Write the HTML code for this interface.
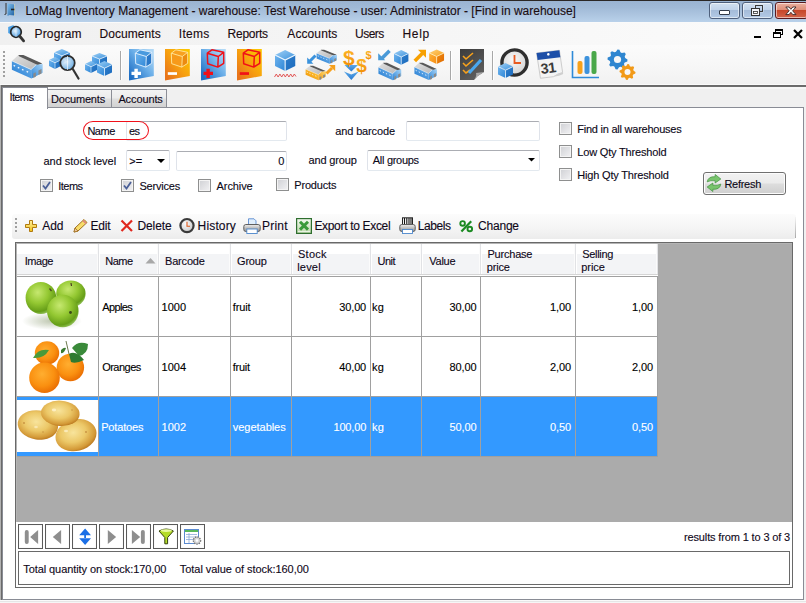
<!DOCTYPE html>
<html><head><meta charset="utf-8">
<style>
*{margin:0;padding:0;box-sizing:border-box}
html,body{width:806px;height:603px;overflow:hidden;background:#f0f0f0;font-family:"Liberation Sans",sans-serif;color:#000}
.a{position:absolute}
.t{position:absolute;white-space:pre;line-height:1;font-size:11px;color:#000;-webkit-text-stroke-width:0.12px}
svg{position:absolute;overflow:visible}
</style></head><body>
<div class="a" style="left:0px;top:0px;width:806px;height:1px;background:#2b2725"></div>
<div class="a" style="left:0px;top:1px;width:806px;height:21px;background:linear-gradient(#9ab3d1,#a0b9d6 30%,#b9d1ea)"></div>
<svg style="left:0px;top:0px" width="30" height="22" viewBox="0 0 30 22">
<defs><linearGradient id="dg" x1="0" y1="0" x2="1" y2="1"><stop offset="0" stop-color="#7fc0ee"/><stop offset="1" stop-color="#1f5fa0"/></linearGradient></defs>
<path d="M7.5 3.5 L14.5 4.5 L14.5 15.5 L9.5 15 L7.5 16 Z" fill="url(#dg)"/>
<path d="M6 3 L6 14 L4.5 14.5" stroke="#333" stroke-width="1" fill="none"/>
<path d="M11 9.5 L15 9.5" stroke="#222" stroke-width="1.6"/>
<path d="M14.5 4 L14.5 16" stroke="#e8e0b0" stroke-width="0.6"/>
</svg>
<div class="t" style="left:25.50px;top:5.00px;font-size:12px;letter-spacing:-0.005px;color:#1a0c10">LoMag Inventory Management - warehouse: Test Warehouse - user: Administrator - [Find in warehouse]</div>
<div class="a" style="left:709px;top:2px;width:31px;height:17px;border:1px solid #4f607c;border-radius:3px;background:linear-gradient(#d2e0f0,#c0d3ea 45%,#a5bcd9 50%,#b3cae6);box-shadow:inset 0 0 0 1px rgba(255,255,255,0.55)"></div>
<div class="a" style="left:742px;top:2px;width:31px;height:17px;border:1px solid #4f607c;border-radius:3px;background:linear-gradient(#d2e0f0,#c0d3ea 45%,#a5bcd9 50%,#b3cae6);box-shadow:inset 0 0 0 1px rgba(255,255,255,0.55)"></div>
<div class="a" style="left:775px;top:2px;width:33px;height:17px;border:1px solid #5a1a20;border-radius:3px;background:linear-gradient(#eab0a0,#de8e78 45%,#c7472a 50%,#d2644a);box-shadow:inset 0 0 0 1px rgba(255,255,255,0.55)"></div>
<div class="a" style="left:719px;top:10px;width:11px;height:5px;background:#fff;border:1px solid #333c4a;border-radius:1px"></div>
<svg style="left:742px;top:0px" width="31" height="22" viewBox="0 0 31 22"><rect x="13.5" y="5.5" width="7" height="6" fill="none" stroke="#333" stroke-width="1"/>
<rect x="12.8" y="4.8" width="8.4" height="7.4" fill="none" stroke="#fff" stroke-width="0.5" opacity="0.6"/>
<rect x="9.5" y="8.5" width="8" height="7" fill="#f4f6fa" stroke="#333" stroke-width="1"/>
<rect x="11.5" y="11.5" width="4" height="2" fill="#fff" stroke="#333" stroke-width="0.8"/></svg>
<svg style="left:775px;top:0px" width="31" height="22" viewBox="0 0 31 22"><path d="M10.8 7 L14 7 L15.9 9.3 L17.8 7 L21 7 L17.6 10.8 L21 14.6 L17.8 14.6 L15.9 12.3 L14 14.6 L10.8 14.6 L14.2 10.8 Z" fill="#fff" stroke="#3a2626" stroke-width="0.9" stroke-linejoin="round"/></svg>
<div class="a" style="left:0px;top:22px;width:806px;height:24px;background:linear-gradient(90deg,#f0f0f0,#f6f6f6 55%,#fbfbfb);border-top:1px solid #fafafa;border-bottom:1px solid #fbfbfb"></div>
<svg style="left:6px;top:24px" width="22" height="20" viewBox="0 0 22 20">
<defs><radialGradient id="mg" cx="0.4" cy="0.4" r="0.6"><stop offset="0" stop-color="#e4f2fc"/><stop offset="1" stop-color="#4a9ae0"/></radialGradient></defs>
<path d="M2.2 3 L7 1.2 L10 2.5 L10 8 L5 10.5 L2.2 9 Z" fill="#4aa0e6"/>
<circle cx="10" cy="8" r="5.3" fill="url(#mg)" stroke="#262626" stroke-width="1.7"/>
<path d="M10 3 L10 13" stroke="#f4faff" stroke-width="0.8" opacity="0.8"/>
<path d="M13.6 12 L17.6 16.8" stroke="#333" stroke-width="2.8" stroke-linecap="round"/>
</svg>
<div class="t" style="left:34.50px;top:28.00px;font-size:12px;letter-spacing:0.183px;color:#1a0a10">Program</div>
<div class="t" style="left:99.50px;top:28.00px;font-size:12px;letter-spacing:0.062px;color:#1a0a10">Documents</div>
<div class="t" style="left:178.80px;top:28.00px;font-size:12px;letter-spacing:0.300px;color:#1a0a10">Items</div>
<div class="t" style="left:227.60px;top:28.00px;font-size:12px;letter-spacing:-0.267px;color:#1a0a10">Reports</div>
<div class="t" style="left:287.30px;top:28.00px;font-size:12px;letter-spacing:0.100px;color:#1a0a10">Accounts</div>
<div class="t" style="left:355.00px;top:28.00px;font-size:12px;letter-spacing:-0.500px;color:#1a0a10">Users</div>
<div class="t" style="left:402.40px;top:28.00px;font-size:12px;letter-spacing:0.733px;color:#1a0a10">Help</div>
<div class="a" style="left:754px;top:35.5px;width:6.5px;height:2.5px;background:#000"></div>
<svg style="left:770px;top:26px" width="14" height="14" viewBox="0 0 14 14"><rect x="5.5" y="3.5" width="7" height="5" fill="none" stroke="#000" stroke-width="1"/><rect x="5" y="3" width="8" height="2" fill="#000"/>
<rect x="3.5" y="6.5" width="7" height="5" fill="#fff" stroke="#000" stroke-width="1"/><rect x="3" y="6" width="8" height="2" fill="#000"/></svg>
<svg style="left:792px;top:28px" width="12" height="12" viewBox="0 0 12 12"><path d="M2.8 2.8 L9.2 9.2 M9.2 2.8 L2.8 9.2" stroke="#000" stroke-width="2.2" stroke-linecap="square"/></svg>
<div class="a" style="left:0px;top:46px;width:806px;height:39px;background:linear-gradient(#fbfbfb,#f7f7f7 50%,#f1f1f1)"></div>
<div class="a" style="left:0px;top:84px;width:806px;height:1px;background:#fafafa"></div>
<div class="a" style="left:0px;top:85px;width:806px;height:1px;background:#6a6a6a"></div>
<div class="a" style="left:0px;top:86px;width:806px;height:1px;background:#6d6d6d"></div>
<div class="a" style="left:0px;top:87px;width:806px;height:2px;background:#f6f6f6"></div>
<div class="a" style="left:0px;top:85px;width:1px;height:516px;background:#b2b2b2"></div>
<div class="a" style="left:1px;top:85px;width:1px;height:516px;background:#6a6a6a"></div>
<div class="a" style="left:2px;top:107px;width:802px;height:493px;background:#fff;border:1px solid #898c95"></div>
<div class="a" style="left:2px;top:87px;width:46px;height:22px;background:#fff;border:1px solid #898c95;border-bottom:none"></div>
<div class="a" style="left:0px;top:600px;width:806px;height:1px;background:#fafafa"></div>
<div class="a" style="left:0px;top:601px;width:806px;height:1px;background:#e6e6e6"></div>
<div class="a" style="left:0px;top:602px;width:806px;height:1px;background:#f6f6f6"></div>
<div class="a" style="left:47px;top:89px;width:65px;height:19px;background:linear-gradient(#f3f3f3,#ececec 45%,#dedede 55%,#d2d2d2);border:1px solid #8c8e96"></div>
<div class="a" style="left:111px;top:89px;width:56px;height:19px;background:linear-gradient(#f3f3f3,#ececec 45%,#dedede 55%,#d2d2d2);border:1px solid #8c8e96"></div>
<div class="t" style="left:9.50px;top:92.00px;font-size:11px;letter-spacing:-0.625px;color:#10081a">Items</div>
<div class="t" style="left:51.00px;top:94.00px;font-size:11px;letter-spacing:-0.188px;color:#10081a">Documents</div>
<div class="t" style="left:118.40px;top:94.00px;font-size:11px;letter-spacing:-0.114px;color:#10081a">Accounts</div>
<svg width="0" height="0" style="position:absolute;left:0;top:0"><defs>
<linearGradient id="roof" x1="0.3" y1="1" x2="0.6" y2="0"><stop offset="0" stop-color="#f2f2f2"/><stop offset="0.6" stop-color="#cdcdcd"/><stop offset="0.85" stop-color="#a0a0a0"/><stop offset="1" stop-color="#5a5a5a"/></linearGradient>
<linearGradient id="bfront" x1="0" y1="0" x2="1" y2="0"><stop offset="0" stop-color="#4a9be0"/><stop offset="1" stop-color="#2e7fcf"/></linearGradient>
<linearGradient id="bend" x1="0" y1="0" x2="1" y2="1"><stop offset="0" stop-color="#8fc6f2"/><stop offset="1" stop-color="#3d8fd8"/></linearGradient>
<linearGradient id="ofront" x1="0" y1="0" x2="1" y2="0"><stop offset="0" stop-color="#ffc02a"/><stop offset="1" stop-color="#f39a12"/></linearGradient>
<linearGradient id="oend" x1="0" y1="0" x2="1" y2="1"><stop offset="0" stop-color="#ffd060"/><stop offset="1" stop-color="#f0a020"/></linearGradient>
<linearGradient id="ctop" x1="0" y1="0" x2="1" y2="1"><stop offset="0" stop-color="#9fd0f6"/><stop offset="1" stop-color="#3d92dc"/></linearGradient>
<linearGradient id="cleft" x1="0" y1="0" x2="1" y2="1"><stop offset="0" stop-color="#6fb4ee"/><stop offset="1" stop-color="#2e86d6"/></linearGradient>
<linearGradient id="cright" x1="0" y1="0" x2="1" y2="1"><stop offset="0" stop-color="#2f7fcc"/><stop offset="1" stop-color="#1c6bbd"/></linearGradient>
<linearGradient id="octop" x1="0" y1="0" x2="1" y2="1"><stop offset="0" stop-color="#ffd27a"/><stop offset="1" stop-color="#f8a11c"/></linearGradient>
<linearGradient id="ocleft" x1="0" y1="0" x2="1" y2="1"><stop offset="0" stop-color="#ffb43a"/><stop offset="1" stop-color="#f58a10"/></linearGradient>
<linearGradient id="ocright" x1="0" y1="0" x2="1" y2="1"><stop offset="0" stop-color="#f08a10"/><stop offset="1" stop-color="#e06a00"/></linearGradient>
<linearGradient id="docb" x1="0.9" y1="0.1" x2="0.1" y2="0.9"><stop offset="0" stop-color="#b0d8f6"/><stop offset="0.45" stop-color="#6aaee8"/><stop offset="1" stop-color="#1e6ec4"/></linearGradient>
<linearGradient id="doco" x1="0.9" y1="0.1" x2="0.1" y2="0.9"><stop offset="0" stop-color="#fcc400"/><stop offset="0.5" stop-color="#f7a010"/><stop offset="1" stop-color="#e8741a"/></linearGradient>
<linearGradient id="dark" x1="0" y1="0" x2="0.6" y2="1"><stop offset="0" stop-color="#3c3c3c"/><stop offset="1" stop-color="#5e5e5e"/></linearGradient>
<linearGradient id="roofl" x1="0" y1="0" x2="1" y2="1"><stop offset="0" stop-color="#e2e2e2"/><stop offset="1" stop-color="#b4b4b4"/></linearGradient>
<linearGradient id="wfb" x1="0" y1="1" x2="1" y2="0"><stop offset="0" stop-color="#1e78d0"/><stop offset="1" stop-color="#78b8ee"/></linearGradient>
<linearGradient id="wrb" x1="0" y1="1" x2="1" y2="0"><stop offset="0" stop-color="#2a84d8"/><stop offset="1" stop-color="#a8d4f6"/></linearGradient>
<linearGradient id="wfo" x1="0" y1="1" x2="1" y2="0"><stop offset="0" stop-color="#f09000"/><stop offset="1" stop-color="#ffcc40"/></linearGradient>
<linearGradient id="wro" x1="0" y1="1" x2="1" y2="0"><stop offset="0" stop-color="#f09a10"/><stop offset="1" stop-color="#ffd870"/></linearGradient>
<g id="wh">
 <path d="M0.9 6.9 L7.4 1.1 L31.2 9.5 L24.9 11 L20.1 15.5 Z" fill="url(#roofl)"/>
 <path d="M7.4 1.1 L12.4 1.1 L31.2 9.5 L26.8 11 L8.1 2.3 Z" fill="#585858"/>
 <path d="M0.9 6.9 L20.1 15.5 L20.4 24.4 L0.9 15.8 Z" fill="url(#wfb)"/>
 <path d="M20.1 15.5 L24.9 11 L31.7 10 L31.7 18.7 L20.4 24.4 Z" fill="url(#wrb)"/>
 <path d="M0.9 6.9 L20.1 15.5 L24.9 11" stroke="#f4f8fc" stroke-width="0.6" fill="none"/>
 <path d="M2.6 11.4 L4.1 12.1 M6.8 13.4 L8.3 14.1 M11 15.4 L12.5 16.1 M15.6 17.4 L17.1 18.1" stroke="#eef6ff" stroke-width="1.3"/>
 <path d="M22.3 19.5 L24.8 18.2 L24.8 22.8 L22.3 24 Z M27.4 16.5 L30.5 15 L30.5 19.5 L27.4 21 Z" fill="#8a8a8a"/>
</g>
<g id="who">
 <path d="M0.9 6.9 L7.4 1.1 L31.2 9.5 L24.9 11 L20.1 15.5 Z" fill="url(#roofl)"/>
 <path d="M7.4 1.1 L12.4 1.1 L31.2 9.5 L26.8 11 L8.1 2.3 Z" fill="#585858"/>
 <path d="M0.9 6.9 L20.1 15.5 L20.4 24.4 L0.9 15.8 Z" fill="url(#wfo)"/>
 <path d="M20.1 15.5 L24.9 11 L31.7 10 L31.7 18.7 L20.4 24.4 Z" fill="url(#wro)"/>
 <path d="M0.9 6.9 L20.1 15.5 L24.9 11" stroke="#fff8e8" stroke-width="0.6" fill="none"/>
 <path d="M2.6 11.4 L4.1 12.1 M6.8 13.4 L8.3 14.1 M11 15.4 L12.5 16.1 M15.6 17.4 L17.1 18.1" stroke="#fff" stroke-width="1.3"/>
 <path d="M22.3 19.5 L24.8 18.2 L24.8 22.8 L22.3 24 Z M27.4 16.5 L30.5 15 L30.5 19.5 L27.4 21 Z" fill="#8a8a8a"/>
</g>
<g id="cube">
 <path d="M0 3.6 L7.5 0 L15 3.6 L7.5 7.2 Z" fill="url(#ctop)"/>
 <path d="M0 3.6 L7.5 7.2 L7.5 15 L0 11.4 Z" fill="url(#cleft)"/>
 <path d="M7.5 7.2 L15 3.6 L15 11.4 L7.5 15 Z" fill="url(#cright)"/>
 <path d="M0 3.6 L7.5 7.2 L15 3.6 M7.5 7.2 L7.5 15" stroke="#eaf5ff" stroke-width="0.8" fill="none"/>
</g>
<g id="ocube">
 <path d="M0 3.6 L7.5 0 L15 3.6 L7.5 7.2 Z" fill="url(#octop)"/>
 <path d="M0 3.6 L7.5 7.2 L7.5 15 L0 11.4 Z" fill="url(#ocleft)"/>
 <path d="M7.5 7.2 L15 3.6 L15 11.4 L7.5 15 Z" fill="url(#ocright)"/>
 <path d="M0 3.6 L7.5 7.2 L15 3.6 M7.5 7.2 L7.5 15" stroke="#fff0c0" stroke-width="0.8" fill="none"/>
</g>
<g id="wcube">
 <path d="M0.5 4 L8 0.5 L16 4 L8 7.5 Z M0.5 4 L8 7.5 L8 16 L0.5 12.5 Z M8 7.5 L16 4 L16 12.5 L8 16 Z" fill="none" stroke-width="1.1" stroke-linejoin="round"/>
</g>
</defs></svg>
<div class="a" style="left:3px;top:51px;width:2px;height:2px;background:#a0a0a0"></div>
<div class="a" style="left:3px;top:55px;width:2px;height:2px;background:#a0a0a0"></div>
<div class="a" style="left:3px;top:59px;width:2px;height:2px;background:#a0a0a0"></div>
<div class="a" style="left:3px;top:63px;width:2px;height:2px;background:#a0a0a0"></div>
<div class="a" style="left:3px;top:67px;width:2px;height:2px;background:#a0a0a0"></div>
<div class="a" style="left:3px;top:71px;width:2px;height:2px;background:#a0a0a0"></div>
<div class="a" style="left:3px;top:75px;width:2px;height:2px;background:#a0a0a0"></div>
<svg style="left:11px;top:54px" width="33" height="26" viewBox="0 0 33 26"><use href="#wh"/></svg>
<svg style="left:48px;top:49px" width="32" height="32" viewBox="0 0 32 32">
<g transform="translate(6,0) scale(1.05,0.95)"><use href="#cube"/></g>
<g transform="translate(1,8) scale(0.8)"><use href="#cube"/></g>
<defs><radialGradient id="lens" cx="0.35" cy="0.35" r="0.7"><stop offset="0" stop-color="#e8f3fb"/><stop offset="1" stop-color="#5ea6e2"/></radialGradient></defs>
<circle cx="19.5" cy="14" r="7.2" fill="url(#lens)" fill-opacity="0.9" stroke="#2d2d2d" stroke-width="1.8"/>
<path d="M19.5 7 L19.5 21" stroke="#fff" stroke-width="0.8" opacity="0.8"/>
<path d="M24.5 19.5 L30.5 29.5" stroke="#333" stroke-width="2.2" stroke-linecap="round"/>
</svg>
<svg style="left:85px;top:53px" width="30" height="25" viewBox="0 0 30 25">
<g transform="translate(7,0) scale(1,0.85)"><use href="#cube"/></g>
<g transform="translate(0,8) scale(0.8)"><use href="#cube"/></g>
<g transform="translate(12,8) scale(1.0)"><use href="#cube"/></g>
</svg>
<div class="a" style="left:120px;top:51px;width:1px;height:29px;background:#a8a8a8"></div>
<div class="a" style="left:121px;top:51px;width:1px;height:29px;background:#ffffff"></div>
<div class="a" style="left:450px;top:51px;width:1px;height:29px;background:#a8a8a8"></div>
<div class="a" style="left:451px;top:51px;width:1px;height:29px;background:#ffffff"></div>
<div class="a" style="left:492px;top:51px;width:1px;height:29px;background:#a8a8a8"></div>
<div class="a" style="left:493px;top:51px;width:1px;height:29px;background:#ffffff"></div>
<svg style="left:129px;top:49px" width="25" height="32" viewBox="0 0 25 32"><path d="M0 0 L24.8 0 L24.8 27 L0 31.6 Z" fill="url(#docb)"/><path d="M6.3 4.2 L10.9 0.8 L22.7 3.3 L17.3 7.5 Z" fill="#4a9ade"/><path d="M6.3 4.2 L17.3 7.5 L16.8 18.1 L6.7 14.7 Z" fill="url(#cleft)"/><path d="M17.3 7.5 L22.7 3.3 L22.7 14.3 L16.8 18.1 Z" fill="#2a78c8"/><path d="M6.3 4.2 L10.9 0.8 L22.7 3.3 L17.3 7.5 Z M17.3 7.5 L16.8 18.1 M6.3 4.2 L6.7 14.7 L16.8 18.1 L22.7 14.3 L22.7 3.3" fill="none" stroke="#e8f4ff" stroke-width="0.9" stroke-linejoin="round"/><path d="M2.5 22.7 L12 22.7 L12 26.1 L2.5 26.1 Z M5.4 19.8 L8.8 19.8 L8.8 28.9 L5.4 28.9 Z" fill="#fff"/></svg>
<svg style="left:165px;top:49px" width="25" height="32" viewBox="0 0 25 32"><path d="M0 0 L24.8 0 L24.8 27 L0 31.6 Z" fill="url(#doco)"/><path d="M6.3 4.2 L10.9 0.8 L22.7 3.3 L17.3 7.5 Z" fill="#f8a020"/><path d="M6.3 4.2 L17.3 7.5 L16.8 18.1 L6.7 14.7 Z" fill="#f79a1a"/><path d="M17.3 7.5 L22.7 3.3 L22.7 14.3 L16.8 18.1 Z" fill="#ec8a10"/><path d="M6.3 4.2 L10.9 0.8 L22.7 3.3 L17.3 7.5 Z M17.3 7.5 L16.8 18.1 M6.3 4.2 L6.7 14.7 L16.8 18.1 L22.7 14.3 L22.7 3.3" fill="none" stroke="#ffe8a0" stroke-width="0.9" stroke-linejoin="round"/><path d="M2.8 23.2 L12 23.2 L12 25.9 L2.8 25.9 Z" fill="#fff"/></svg>
<svg style="left:201px;top:49px" width="25" height="32" viewBox="0 0 25 32"><path d="M0 0 L24.8 0 L24.8 27 L0 31.6 Z" fill="url(#docb)"/><path d="M6.3 4.2 L10.9 0.8 L22.7 3.3 L17.3 7.5 Z M17.3 7.5 L16.8 18.1 M6.3 4.2 L6.7 14.7 L16.8 18.1 L22.7 14.3 L22.7 3.3" fill="none" stroke="#f01018" stroke-width="1.5" stroke-linejoin="round"/><path d="M2.5 22.7 L12 22.7 L12 26.1 L2.5 26.1 Z M5.4 19.8 L8.8 19.8 L8.8 28.9 L5.4 28.9 Z" fill="#f01018"/></svg>
<svg style="left:237px;top:49px" width="25" height="32" viewBox="0 0 25 32"><path d="M0 0 L24.8 0 L24.8 27 L0 31.6 Z" fill="url(#doco)"/><path d="M6.3 4.2 L10.9 0.8 L22.7 3.3 L17.3 7.5 Z M17.3 7.5 L16.8 18.1 M6.3 4.2 L6.7 14.7 L16.8 18.1 L22.7 14.3 L22.7 3.3" fill="none" stroke="#f01018" stroke-width="1.5" stroke-linejoin="round"/><path d="M2.8 23.2 L12 23.2 L12 25.9 L2.8 25.9 Z" fill="#f01018"/></svg>
<svg style="left:274px;top:50px" width="23" height="29" viewBox="0 0 23 29"><g transform="translate(1,0) scale(1.35,1.4)"><use href="#cube"/></g>
<path d="M0.5 27 L2.3 24 L4.1 27 L5.9 24 L7.7 27 L9.5 24 L11.3 27 L13.1 24 L14.9 27 L16.7 24 L18.5 27 L20.3 24 L22 26.5" stroke="#e04848" stroke-width="0.9" fill="none"/></svg>
<svg style="left:305px;top:49px" width="33" height="32" viewBox="0 0 33 32">
<g transform="translate(11,0) scale(0.66,0.6)"><use href="#wh"/></g>
<g transform="translate(0,16) scale(0.66,0.62)"><use href="#who"/></g>
<path d="M10.5 6.5 L5 12" stroke="#3a92dc" stroke-width="3"/><path d="M2.2 14.8 L2.2 8.6 L8.4 14.8 Z" fill="#3a92dc"/>
<path d="M21.5 24.5 L27 19" stroke="#f7a01c" stroke-width="3"/><path d="M30.2 16 L24 16 L30.2 22.2 Z" fill="#f7a01c"/>
</svg>
<svg width="0" height="0" style="position:absolute"><defs><linearGradient id="dol" x1="0" y1="0" x2="0" y2="1"><stop offset="0" stop-color="#ffc030"/><stop offset="1" stop-color="#f08800"/></linearGradient>
<linearGradient id="chev" x1="0" y1="0" x2="0" y2="1"><stop offset="0" stop-color="#5aa8e8"/><stop offset="1" stop-color="#2a7ad0"/></linearGradient></defs></svg>
<svg style="left:343px;top:49px" width="30" height="32" viewBox="0 0 30 32">
<path d="M1.5 16 L15 16 L8.3 22.6 Z" fill="url(#chev)"/>
<path d="M0.9 22.6 L8.3 25.4 L15.7 22.6 L8.3 30.9 Z" fill="url(#chev)"/>
<text x="0" y="15.5" font-family="Liberation Sans" font-weight="bold" font-size="21" fill="url(#dol)">$</text>
<text x="13.2" y="22.5" font-family="Liberation Sans" font-weight="bold" font-size="19" fill="url(#dol)">$</text>
<text x="22.6" y="9.8" font-family="Liberation Sans" font-weight="bold" font-size="11" fill="url(#dol)">$</text>
</svg>
<svg style="left:377px;top:49px" width="32" height="32" viewBox="0 0 32 32">
<path d="M12.5 1.8 L4.5 9.8" stroke="#4a9ad8" stroke-width="3.6"/>
<path d="M1.2 11.3 L1.2 4.2 L8.3 11.3 Z" fill="#4a9ad8"/>
<g transform="translate(17,1) scale(0.96,0.98)"><use href="#cube"/></g>
<g transform="translate(0.8,13) scale(0.74,0.75)"><use href="#wh"/></g>
</svg>
<svg style="left:413px;top:49px" width="32" height="32" viewBox="0 0 32 32">
<path d="M1.8 12 L9.5 4.3" stroke="#f7a000" stroke-width="3.6"/>
<path d="M13 0.8 L5 0.8 L13 8.8 Z" fill="#f7a000"/>
<g transform="translate(16.2,0.5) scale(0.99,0.97)"><use href="#ocube"/></g>
<g transform="translate(0.8,12.8) scale(0.73,0.75)"><use href="#wh"/></g>
</svg>
<svg style="left:460px;top:49px" width="24" height="31" viewBox="0 0 24 31">
<path d="M0 0 L24 0 L24 23 Q18 26 14 31 L0 31 Z" fill="url(#dark)"/>
<path d="M24 23 Q18 26 14 31 Q17 27 16 24 Z" fill="#a8a8a8"/>
<path d="M3 7 L6 10 L13 4 M3 14 L6 17 L13 11 M3 21 L6 24 L10 21" stroke="#f8a21c" stroke-width="1.6" fill="none"/>
<path d="M9 24 L21 11" stroke="#4aa8f0" stroke-width="3.2"/>
</svg>
<svg style="left:498px;top:49px" width="31" height="30" viewBox="0 0 31 30">
<defs><radialGradient id="cface" cx="0.45" cy="0.4" r="0.6"><stop offset="0" stop-color="#f8f8f8"/><stop offset="1" stop-color="#d4d4d4"/></radialGradient></defs><circle cx="16.5" cy="13.5" r="12.6" fill="url(#cface)" stroke="#2e2e2e" stroke-width="3.4"/>
<path d="M16.5 6 L16.5 14 L23 14" stroke="#e85a20" stroke-width="1.8" fill="none"/>
<g transform="translate(0,14) scale(1,1)"><use href="#cube"/></g>
</svg>
<svg style="left:536px;top:49px" width="29" height="30" viewBox="0 0 29 30">
<g transform="rotate(-7 14 15)">
<path d="M2 2.5 L25 2.5 L25.5 25 Q20 25.5 16 28 L2.8 28 Z" fill="#f4f4f4" stroke="#bdbdbd" stroke-width="0.7"/>
<path d="M25.5 25 Q20 25.5 16 28 Q22 28 26 26.5 Z" fill="#cfcfcf"/>
<path d="M2 2.5 L25 2.5 L25.1 9.5 L2.2 9.5 Z" fill="#1d4fa8"/>
<circle cx="13.5" cy="5.2" r="1.3" fill="#fff"/>
<text x="4.2" y="23.8" font-family="Liberation Sans" font-weight="bold" font-size="14.5" fill="#3a3a3a" letter-spacing="-0.5">31</text>
</g></svg>
<svg style="left:571px;top:50px" width="30" height="29" viewBox="0 0 30 29">
<path d="M1.5 1 L1.5 27.5 L28 27.5" stroke="#2e8ad8" stroke-width="1.6" fill="none"/>
<rect x="6.5" y="11" width="5" height="13" rx="2" fill="#f7a21c"/>
<rect x="13.5" y="6" width="5" height="18" rx="2" fill="#3d92dc"/>
<rect x="20.5" y="1" width="5" height="23" rx="2" fill="#4aa84a"/>
</svg>
<svg style="left:607px;top:49px" width="30" height="32" viewBox="0 0 30 32"><polygon points="20.50,10.50 20.31,12.45 17.71,13.48 16.99,14.83 17.57,17.57 16.06,18.81 13.48,17.71 12.02,18.15 10.50,20.50 8.55,20.31 7.52,17.71 6.17,16.99 3.43,17.57 2.19,16.06 3.29,13.48 2.85,12.02 0.50,10.50 0.69,8.55 3.29,7.52 4.01,6.17 3.43,3.43 4.94,2.19 7.52,3.29 8.98,2.85 10.50,0.50 12.45,0.69 13.48,3.29 14.83,4.01 17.57,3.43 18.81,4.94 17.71,7.52 18.15,8.98" fill="#2f86d0"/><circle cx="10.5" cy="10.5" r="3.6" fill="#f7f7f7"/><polygon points="28.50,23.00 28.35,24.56 26.27,25.39 25.69,26.47 26.16,28.66 24.94,29.65 22.89,28.77 21.72,29.12 20.50,31.00 18.94,30.85 18.11,28.77 17.03,28.19 14.84,28.66 13.85,27.44 14.73,25.39 14.38,24.22 12.50,23.00 12.65,21.44 14.73,20.61 15.31,19.53 14.84,17.34 16.06,16.35 18.11,17.23 19.28,16.88 20.50,15.00 22.06,15.15 22.89,17.23 23.97,17.81 26.16,17.34 27.15,18.56 26.27,20.61 26.62,21.78" fill="#f29a18"/><circle cx="20.5" cy="23" r="3" fill="#f7f7f7"/></svg>
<div class="a" style="left:126px;top:121px;width:161px;height:20px;background:#fff;border:1px solid #dfe3ea;border-top-color:#abadb3;border-bottom-color:#e3e9ef;border-radius:2px"></div>
<div class="a" style="left:406px;top:121px;width:134px;height:20px;background:#fff;border:1px solid #dfe3ea;border-top-color:#abadb3;border-bottom-color:#e3e9ef;border-radius:2px"></div>
<div class="a" style="left:176px;top:151px;width:111px;height:20px;background:#fff;border:1px solid #dfe3ea;border-top-color:#abadb3;border-bottom-color:#e3e9ef;border-radius:2px"></div>
<div class="a" style="left:126px;top:150px;width:44px;height:21px;background:#fff;border:1px solid #dfe3ea;border-top-color:#abadb3;border-bottom-color:#e3e9ef;border-radius:2px"></div>
<div class="a" style="left:367px;top:150px;width:173px;height:21px;background:#fff;border:1px solid #dfe3ea;border-top-color:#abadb3;border-bottom-color:#e3e9ef;border-radius:2px"></div>
<svg style="left:157px;top:159px" width="9" height="5" viewBox="0 0 9 5"><path d="M0 0 L8 0 L4 4 Z" fill="#000"/></svg>
<svg style="left:528px;top:158px" width="8" height="5" viewBox="0 0 8 5"><path d="M0 0 L7 0 L3.5 3.5 Z" fill="#000"/></svg>
<div class="a" style="left:83px;top:121px;width:66px;height:19px;border:1.2px solid #f0101a;border-radius:10px/9.5px"></div>
<div class="t" style="left:87.40px;top:126.00px;font-size:11px;letter-spacing:-0.467px;color:#0c0818">Name</div>
<div class="t" style="left:129.00px;top:126.00px;font-size:11px;letter-spacing:-0.500px;color:#0c0818">es</div>
<div class="t" style="left:43.40px;top:156.00px;font-size:11px;letter-spacing:0.000px;color:#0c0818">and stock level</div>
<div class="t" style="left:129.30px;top:156.00px;font-size:11px;letter-spacing:0.000px;color:#0c0818">&gt;=</div>
<div class="t" style="left:278.20px;top:156.00px;font-size:11px;letter-spacing:0.000px;color:#0c0818">0</div>
<div class="t" style="left:335.30px;top:126.00px;font-size:11px;letter-spacing:-0.140px;color:#0c0818">and barcode</div>
<div class="t" style="left:308.50px;top:155.00px;font-size:11px;letter-spacing:-0.138px;color:#0c0818">and group</div>
<div class="t" style="left:372.80px;top:155.00px;font-size:11px;letter-spacing:-0.300px;color:#0c0818">All groups</div>
<div class="a" style="left:40px;top:179px;width:13px;height:13px;border:1px solid #8e8f8f;background:linear-gradient(135deg,#cfd0d4,#f2f2f4);box-shadow:inset 0 0 0 1px #f4f4f4"></div>
<svg style="left:40px;top:179px" width="13" height="13" viewBox="0 0 13 13"><path d="M3 6.5 L5.5 9.5 L10 3" stroke="#4a5f97" stroke-width="1.8" fill="none"/></svg>
<div class="t" style="left:58.30px;top:181.00px;font-size:11px;letter-spacing:-0.525px;color:#0c0818">Items</div>
<div class="a" style="left:121px;top:179px;width:13px;height:13px;border:1px solid #8e8f8f;background:linear-gradient(135deg,#cfd0d4,#f2f2f4);box-shadow:inset 0 0 0 1px #f4f4f4"></div>
<svg style="left:121px;top:179px" width="13" height="13" viewBox="0 0 13 13"><path d="M3 6.5 L5.5 9.5 L10 3" stroke="#4a5f97" stroke-width="1.8" fill="none"/></svg>
<div class="t" style="left:139.50px;top:181.00px;font-size:11px;letter-spacing:-0.214px;color:#0c0818">Services</div>
<div class="a" style="left:198px;top:179px;width:13px;height:13px;border:1px solid #8e8f8f;background:linear-gradient(135deg,#cfd0d4,#f2f2f4);box-shadow:inset 0 0 0 1px #f4f4f4"></div>
<div class="t" style="left:216.60px;top:181.00px;font-size:11px;letter-spacing:-0.100px;color:#0c0818">Archive</div>
<div class="a" style="left:276px;top:178px;width:13px;height:13px;border:1px solid #8e8f8f;background:linear-gradient(135deg,#cfd0d4,#f2f2f4);box-shadow:inset 0 0 0 1px #f4f4f4"></div>
<div class="t" style="left:294.30px;top:180.00px;font-size:11px;letter-spacing:-0.186px;color:#0c0818">Products</div>
<div class="a" style="left:559px;top:122px;width:13px;height:13px;border:1px solid #8e8f8f;background:linear-gradient(135deg,#cfd0d4,#f2f2f4);box-shadow:inset 0 0 0 1px #f4f4f4"></div>
<div class="t" style="left:577.30px;top:124.00px;font-size:11px;letter-spacing:-0.238px;color:#0c0818">Find in all warehouses</div>
<div class="a" style="left:559px;top:145px;width:13px;height:13px;border:1px solid #8e8f8f;background:linear-gradient(135deg,#cfd0d4,#f2f2f4);box-shadow:inset 0 0 0 1px #f4f4f4"></div>
<div class="t" style="left:577.30px;top:147.00px;font-size:11px;letter-spacing:-0.181px;color:#0c0818">Low Qty Threshold</div>
<div class="a" style="left:559px;top:168px;width:13px;height:13px;border:1px solid #8e8f8f;background:linear-gradient(135deg,#cfd0d4,#f2f2f4);box-shadow:inset 0 0 0 1px #f4f4f4"></div>
<div class="t" style="left:577.30px;top:170.00px;font-size:11px;letter-spacing:-0.182px;color:#0c0818">High Qty Threshold</div>
<div class="a" style="left:703px;top:172px;width:83px;height:23px;border:1px solid #707070;border-radius:3px;background:linear-gradient(#f2f2f2,#ebebeb 48%,#dddddd 52%,#cfcfcf);box-shadow:inset 0 0 0 1px #fcfcfc"></div>
<svg style="left:705px;top:175px" width="18" height="16" viewBox="0 0 18 16"><g transform="translate(9 8) scale(1.14) translate(-9 -8)">
<path d="M3 7 Q4 2 10 2.5 L10 0.5 L15 4.5 L10 8 L10 6 Q6 5.5 3 7 Z" fill="#78c46c" stroke="#3e8e3a" stroke-width="0.6"/>
<path d="M15 9 Q14 14 8 13.5 L8 15.5 L3 11.5 L8 8 L8 10 Q12 10.5 15 9 Z" fill="#78c46c" stroke="#3e8e3a" stroke-width="0.6"/>
</g></svg>
<div class="t" style="left:724.40px;top:179.00px;font-size:11px;letter-spacing:-0.267px;color:#0c0818">Refresh</div>
<div class="a" style="left:12px;top:214px;width:784px;height:25px;border-radius:3px;background:linear-gradient(#fcfcfc,#f5f5f5 55%,#ececec)"></div>
<div class="a" style="left:15px;top:218px;width:2px;height:2px;background:#a0a0a0"></div>
<div class="a" style="left:15px;top:222px;width:2px;height:2px;background:#a0a0a0"></div>
<div class="a" style="left:15px;top:226px;width:2px;height:2px;background:#a0a0a0"></div>
<div class="a" style="left:15px;top:230px;width:2px;height:2px;background:#a0a0a0"></div>
<div class="a" style="left:795px;top:217px;width:1px;height:21px;background:linear-gradient(#f4f4f4,#a8a8a8)"></div>
<svg style="left:24px;top:219px" width="14" height="14" viewBox="0 0 14 14"><defs><linearGradient id="plg" x1="0" y1="0" x2="0" y2="1"><stop offset="0" stop-color="#fff0a0"/><stop offset="1" stop-color="#f2c21a"/></linearGradient></defs><path d="M5.5 1.5 L8.5 1.5 L8.5 5.5 L12.5 5.5 L12.5 8.5 L8.5 8.5 L8.5 12.5 L5.5 12.5 L5.5 8.5 L1.5 8.5 L1.5 5.5 L5.5 5.5 Z" fill="url(#plg)" stroke="#b07a10" stroke-width="1"/></svg>
<div class="t" style="left:42.30px;top:220.00px;font-size:12px;letter-spacing:-0.050px;color:#10081a">Add</div>
<svg style="left:72px;top:218px" width="17" height="16" viewBox="0 0 17 16"><path d="M2 14 L3 10 L12 1.5 L15 4.5 L6 13 Z" fill="#f7dc6a" stroke="#a07020" stroke-width="1"/>
<path d="M2 14 L3 10 L6 13 Z" fill="#f0c8a0" stroke="#a07020" stroke-width="0.8"/><path d="M11 2.5 L14 5.5" stroke="#e08080" stroke-width="1.5"/></svg>
<div class="t" style="left:90.50px;top:220.00px;font-size:12px;letter-spacing:-0.233px;color:#10081a">Edit</div>
<svg style="left:120px;top:219px" width="14" height="14" viewBox="0 0 14 14"><path d="M1.5 1.5 L12 12 M12 1.5 L1.5 12" stroke="#e0281e" stroke-width="2.2"/></svg>
<div class="t" style="left:137.40px;top:220.00px;font-size:12px;letter-spacing:-0.080px;color:#10081a">Delete</div>
<svg style="left:179px;top:218px" width="17" height="17" viewBox="0 0 17 17"><defs><radialGradient id="clk" cx="0.4" cy="0.35" r="0.7"><stop offset="0" stop-color="#fafafa"/><stop offset="1" stop-color="#c8c8c8"/></radialGradient></defs><circle cx="8" cy="7.6" r="6.6" fill="url(#clk)" stroke="#3a3a3a" stroke-width="2.2"/><path d="M8 3.8 L8 8.2 L11 8.2" stroke="#e05818" stroke-width="1.1" fill="none"/></svg>
<div class="t" style="left:197.60px;top:220.00px;font-size:12px;letter-spacing:0.150px;color:#10081a">History</div>
<svg style="left:243px;top:218px" width="18" height="16" viewBox="0 0 18 16"><defs><linearGradient id="prb" x1="0" y1="0" x2="0" y2="1"><stop offset="0" stop-color="#eeeeee"/><stop offset="1" stop-color="#8e8e8e"/></linearGradient></defs>
<path d="M5.5 0.8 L11 0.8 L13 2.8 L13 8 L5.5 8 Z" fill="#dfeefc" stroke="#5a8ad0" stroke-width="0.9"/>
<rect x="0.8" y="6.5" width="16.4" height="7" rx="2" fill="url(#prb)" stroke="#5e5e5e" stroke-width="1"/>
<rect x="3.8" y="11" width="10.4" height="4.5" fill="#fff" stroke="#4a86cc" stroke-width="0.9"/></svg>
<div class="t" style="left:262.00px;top:220.00px;font-size:12px;letter-spacing:0.200px;color:#10081a">Print</div>
<svg style="left:296px;top:218px" width="16" height="16" viewBox="0 0 16 16"><defs><linearGradient id="xlg" x1="0" y1="0" x2="0" y2="1"><stop offset="0" stop-color="#f4faf0"/><stop offset="1" stop-color="#bcd8aa"/></linearGradient></defs>
<rect x="0.6" y="0.6" width="14.8" height="14.8" fill="url(#xlg)" stroke="#2e6e2e" stroke-width="1.2"/>
<path d="M4 3.8 L12 11.6 M12 3.8 L4 11.6" stroke="#3a9a3a" stroke-width="3"/>
<path d="M2 13.5 L14 13.5" stroke="#fff" stroke-width="0.8" opacity="0.8"/></svg>
<div class="t" style="left:314.40px;top:220.00px;font-size:12px;letter-spacing:-0.321px;color:#10081a">Export to Excel</div>
<svg style="left:399px;top:217px" width="17" height="18" viewBox="0 0 17 18">
<rect x="3.5" y="0.8" width="10" height="8" fill="#fff" stroke="#222" stroke-width="1"/>
<path d="M5.5 1 L5.5 8.5 M7.8 1 L7.8 8.5 M10 1 L10 8.5 M12 1 L12 8.5" stroke="#111" stroke-width="1.1"/>
<rect x="0.8" y="7.5" width="15.4" height="7" rx="2" fill="url(#prb)" stroke="#5e5e5e" stroke-width="1"/>
<rect x="3.5" y="12.5" width="10" height="4" fill="#fff" stroke="#4a86cc" stroke-width="0.9"/></svg>
<div class="t" style="left:417.70px;top:220.00px;font-size:12px;letter-spacing:-0.420px;color:#10081a">Labels</div>
<svg style="left:459px;top:220px" width="15" height="13" viewBox="0 0 15 13">
<circle cx="3.6" cy="3.4" r="2.3" fill="none" stroke="#1b8a22" stroke-width="1.9"/>
<circle cx="10.8" cy="9" r="2.3" fill="none" stroke="#1b8a22" stroke-width="1.9"/>
<path d="M12.2 1.2 L2.4 11.4" stroke="#1b8a22" stroke-width="2.2"/></svg>
<div class="t" style="left:478.00px;top:220.00px;font-size:12px;letter-spacing:-0.200px;color:#10081a">Change</div>
<div class="a" style="left:15px;top:242px;width:778px;height:346px;border:1px solid #696969;background:#fff"></div>
<div class="a" style="left:16px;top:243px;width:776px;height:279px;background:#ababab"></div>
<div class="a" style="left:16px;top:243px;width:642px;height:31px;background:linear-gradient(#fff 0,#fff 11px,#f3f4f6 11px,#f3f4f6 100%)"></div>
<div class="a" style="left:16px;top:274px;width:642px;height:1px;background:#d5d5d5"></div>
<div class="a" style="left:16px;top:275px;width:642px;height:1px;background:#fff"></div>
<div class="a" style="left:97px;top:243px;width:1px;height:31px;background:#fbfbfb"></div>
<div class="a" style="left:98px;top:243px;width:1px;height:31px;background:#e1e2e5"></div>
<div class="a" style="left:99px;top:243px;width:1px;height:31px;background:#ffffff"></div>
<div class="a" style="left:157px;top:243px;width:1px;height:31px;background:#fbfbfb"></div>
<div class="a" style="left:158px;top:243px;width:1px;height:31px;background:#e1e2e5"></div>
<div class="a" style="left:159px;top:243px;width:1px;height:31px;background:#ffffff"></div>
<div class="a" style="left:229px;top:243px;width:1px;height:31px;background:#fbfbfb"></div>
<div class="a" style="left:230px;top:243px;width:1px;height:31px;background:#e1e2e5"></div>
<div class="a" style="left:231px;top:243px;width:1px;height:31px;background:#ffffff"></div>
<div class="a" style="left:290px;top:243px;width:1px;height:31px;background:#fbfbfb"></div>
<div class="a" style="left:291px;top:243px;width:1px;height:31px;background:#e1e2e5"></div>
<div class="a" style="left:292px;top:243px;width:1px;height:31px;background:#ffffff"></div>
<div class="a" style="left:369px;top:243px;width:1px;height:31px;background:#fbfbfb"></div>
<div class="a" style="left:370px;top:243px;width:1px;height:31px;background:#e1e2e5"></div>
<div class="a" style="left:371px;top:243px;width:1px;height:31px;background:#ffffff"></div>
<div class="a" style="left:420px;top:243px;width:1px;height:31px;background:#fbfbfb"></div>
<div class="a" style="left:421px;top:243px;width:1px;height:31px;background:#e1e2e5"></div>
<div class="a" style="left:422px;top:243px;width:1px;height:31px;background:#ffffff"></div>
<div class="a" style="left:479px;top:243px;width:1px;height:31px;background:#fbfbfb"></div>
<div class="a" style="left:480px;top:243px;width:1px;height:31px;background:#e1e2e5"></div>
<div class="a" style="left:481px;top:243px;width:1px;height:31px;background:#ffffff"></div>
<div class="a" style="left:574px;top:243px;width:1px;height:31px;background:#fbfbfb"></div>
<div class="a" style="left:575px;top:243px;width:1px;height:31px;background:#e1e2e5"></div>
<div class="a" style="left:576px;top:243px;width:1px;height:31px;background:#ffffff"></div>
<div class="a" style="left:656px;top:243px;width:1px;height:31px;background:#fbfbfb"></div>
<div class="a" style="left:657px;top:243px;width:1px;height:31px;background:#e1e2e5"></div>
<div class="t" style="left:24.70px;top:256.00px;font-size:11px;letter-spacing:-0.450px;color:#10081a">Image</div>
<div class="t" style="left:105.30px;top:256.00px;font-size:11px;letter-spacing:-0.533px;color:#10081a">Name</div>
<svg style="left:145px;top:257px" width="11" height="7" viewBox="0 0 11 7"><path d="M0.5 6.5 L5.5 1 L10.5 6.5 Z" fill="#a8a8a8"/></svg>
<div class="t" style="left:165.00px;top:256.00px;font-size:11px;letter-spacing:-0.183px;color:#10081a">Barcode</div>
<div class="t" style="left:237.10px;top:256.00px;font-size:11px;letter-spacing:-0.225px;color:#10081a">Group</div>
<div class="t" style="left:297.90px;top:249.00px;font-size:11px;letter-spacing:0.300px;color:#10081a">Stock</div>
<div class="t" style="left:297.20px;top:262.00px;font-size:11px;letter-spacing:0.200px;color:#10081a">level</div>
<div class="t" style="left:377.60px;top:256.00px;font-size:11px;letter-spacing:-0.533px;color:#10081a">Unit</div>
<div class="t" style="left:429.30px;top:256.00px;font-size:11px;letter-spacing:-0.275px;color:#10081a">Value</div>
<div class="t" style="left:487.50px;top:249.00px;font-size:11px;letter-spacing:-0.214px;color:#10081a">Purchase</div>
<div class="t" style="left:486.80px;top:262.00px;font-size:11px;letter-spacing:-0.175px;color:#10081a">price</div>
<div class="t" style="left:582.20px;top:249.00px;font-size:11px;letter-spacing:-0.317px;color:#10081a">Selling</div>
<div class="t" style="left:581.30px;top:262.00px;font-size:11px;letter-spacing:-0.075px;color:#10081a">price</div>
<div class="a" style="left:16px;top:276px;width:642px;height:1px;background:#a0a0a0"></div>
<div class="a" style="left:16px;top:277px;width:642px;height:59px;background:#ffffff"></div>
<div class="a" style="left:16px;top:336px;width:642px;height:1px;background:#a0a0a0"></div>
<div class="a" style="left:98px;top:277px;width:1px;height:59px;background:#a0a0a0"></div>
<div class="a" style="left:158px;top:277px;width:1px;height:59px;background:#a0a0a0"></div>
<div class="a" style="left:230px;top:277px;width:1px;height:59px;background:#a0a0a0"></div>
<div class="a" style="left:291px;top:277px;width:1px;height:59px;background:#a0a0a0"></div>
<div class="a" style="left:370px;top:277px;width:1px;height:59px;background:#a0a0a0"></div>
<div class="a" style="left:421px;top:277px;width:1px;height:59px;background:#a0a0a0"></div>
<div class="a" style="left:480px;top:277px;width:1px;height:59px;background:#a0a0a0"></div>
<div class="a" style="left:575px;top:277px;width:1px;height:59px;background:#a0a0a0"></div>
<div class="a" style="left:657px;top:277px;width:1px;height:59px;background:#a0a0a0"></div>
<div class="t" style="left:102.20px;top:302.00px;font-size:11px;letter-spacing:-0.600px;color:#000000">Apples</div>
<div class="t" style="left:161.60px;top:302.00px;font-size:11px;letter-spacing:0.000px;color:#000000">1000</div>
<div class="t" style="left:232.80px;top:302.00px;font-size:11px;letter-spacing:-0.150px;color:#000000">fruit</div>
<div class="t" style="left:339.30px;top:302.00px;font-size:11px;letter-spacing:-0.150px;color:#000000">30,00</div>
<div class="t" style="left:372.10px;top:302.00px;font-size:11px;letter-spacing:0.200px;color:#000000">kg</div>
<div class="t" style="left:449.50px;top:302.00px;font-size:11px;letter-spacing:-0.100px;color:#000000">30,00</div>
<div class="t" style="left:550.00px;top:302.00px;font-size:11px;letter-spacing:-0.100px;color:#000000">1,00</div>
<div class="t" style="left:632.00px;top:302.00px;font-size:11px;letter-spacing:-0.100px;color:#000000">1,00</div>
<div class="a" style="left:16px;top:280px;width:82px;height:52px;background:#fff"></div>
<div class="a" style="left:16px;top:337px;width:642px;height:59px;background:#ffffff"></div>
<div class="a" style="left:16px;top:396px;width:642px;height:1px;background:#a0a0a0"></div>
<div class="a" style="left:98px;top:337px;width:1px;height:59px;background:#a0a0a0"></div>
<div class="a" style="left:158px;top:337px;width:1px;height:59px;background:#a0a0a0"></div>
<div class="a" style="left:230px;top:337px;width:1px;height:59px;background:#a0a0a0"></div>
<div class="a" style="left:291px;top:337px;width:1px;height:59px;background:#a0a0a0"></div>
<div class="a" style="left:370px;top:337px;width:1px;height:59px;background:#a0a0a0"></div>
<div class="a" style="left:421px;top:337px;width:1px;height:59px;background:#a0a0a0"></div>
<div class="a" style="left:480px;top:337px;width:1px;height:59px;background:#a0a0a0"></div>
<div class="a" style="left:575px;top:337px;width:1px;height:59px;background:#a0a0a0"></div>
<div class="a" style="left:657px;top:337px;width:1px;height:59px;background:#a0a0a0"></div>
<div class="t" style="left:102.20px;top:362.00px;font-size:11px;letter-spacing:-0.517px;color:#000000">Oranges</div>
<div class="t" style="left:161.60px;top:362.00px;font-size:11px;letter-spacing:0.000px;color:#000000">1004</div>
<div class="t" style="left:232.80px;top:362.00px;font-size:11px;letter-spacing:-0.300px;color:#000000">fruit</div>
<div class="t" style="left:339.30px;top:362.00px;font-size:11px;letter-spacing:-0.150px;color:#000000">40,00</div>
<div class="t" style="left:372.10px;top:362.00px;font-size:11px;letter-spacing:0.200px;color:#000000">kg</div>
<div class="t" style="left:449.50px;top:362.00px;font-size:11px;letter-spacing:-0.100px;color:#000000">80,00</div>
<div class="t" style="left:550.00px;top:362.00px;font-size:11px;letter-spacing:-0.100px;color:#000000">2,00</div>
<div class="t" style="left:632.00px;top:362.00px;font-size:11px;letter-spacing:-0.100px;color:#000000">2,00</div>
<div class="a" style="left:16px;top:340px;width:82px;height:52px;background:#fff"></div>
<div class="a" style="left:16px;top:397px;width:642px;height:59px;background:#3399ff"></div>
<div class="a" style="left:16px;top:456px;width:642px;height:1px;background:#a0a0a0"></div>
<div class="a" style="left:98px;top:397px;width:1px;height:59px;background:#a0a0a0"></div>
<div class="a" style="left:158px;top:397px;width:1px;height:59px;background:#a0a0a0"></div>
<div class="a" style="left:230px;top:397px;width:1px;height:59px;background:#a0a0a0"></div>
<div class="a" style="left:291px;top:397px;width:1px;height:59px;background:#a0a0a0"></div>
<div class="a" style="left:370px;top:397px;width:1px;height:59px;background:#a0a0a0"></div>
<div class="a" style="left:421px;top:397px;width:1px;height:59px;background:#a0a0a0"></div>
<div class="a" style="left:480px;top:397px;width:1px;height:59px;background:#a0a0a0"></div>
<div class="a" style="left:575px;top:397px;width:1px;height:59px;background:#a0a0a0"></div>
<div class="a" style="left:657px;top:397px;width:1px;height:59px;background:#a0a0a0"></div>
<div class="t" style="left:101.20px;top:422.00px;font-size:11px;letter-spacing:-0.157px;color:#ffffff">Potatoes</div>
<div class="t" style="left:161.60px;top:422.00px;font-size:11px;letter-spacing:0.000px;color:#ffffff">1002</div>
<div class="t" style="left:232.80px;top:422.00px;font-size:11px;letter-spacing:-0.033px;color:#ffffff">vegetables</div>
<div class="t" style="left:333.45px;top:422.00px;font-size:11px;letter-spacing:-0.150px;color:#ffffff">100,00</div>
<div class="t" style="left:372.10px;top:422.00px;font-size:11px;letter-spacing:0.200px;color:#ffffff">kg</div>
<div class="t" style="left:449.50px;top:422.00px;font-size:11px;letter-spacing:-0.100px;color:#ffffff">50,00</div>
<div class="t" style="left:550.00px;top:422.00px;font-size:11px;letter-spacing:-0.100px;color:#ffffff">0,50</div>
<div class="t" style="left:632.00px;top:422.00px;font-size:11px;letter-spacing:-0.100px;color:#ffffff">0,50</div>
<div class="a" style="left:16px;top:400px;width:82px;height:52px;background:#fff"></div>
<svg width="0" height="0" style="position:absolute;left:0;top:0"><defs>
<radialGradient id="apple" cx="0.4" cy="0.33" r="0.68"><stop offset="0" stop-color="#c6e870"/><stop offset="0.5" stop-color="#94c832"/><stop offset="0.88" stop-color="#669e18"/><stop offset="1" stop-color="#8cbc50"/></radialGradient>
<radialGradient id="orange" cx="0.42" cy="0.38" r="0.66"><stop offset="0" stop-color="#ffae30"/><stop offset="0.6" stop-color="#fa9010"/><stop offset="1" stop-color="#e86a00"/></radialGradient>
<radialGradient id="potato" cx="0.45" cy="0.4" r="0.62"><stop offset="0" stop-color="#f8e49c"/><stop offset="0.5" stop-color="#ecc868"/><stop offset="0.85" stop-color="#d49a38"/><stop offset="1" stop-color="#b8761e"/></radialGradient>
<radialGradient id="shadow" cx="0.5" cy="0.5" r="0.5"><stop offset="0" stop-color="#8a9a70" stop-opacity="0.55"/><stop offset="1" stop-color="#8a9a70" stop-opacity="0"/></radialGradient>
</defs></svg>
<svg style="left:16px;top:276px" width="82" height="60" viewBox="0 0 82 60">
<ellipse cx="36" cy="45" rx="30" ry="9" fill="url(#shadow)"/>
<ellipse cx="54.9" cy="17.8" rx="14.7" ry="13.4" fill="url(#apple)"/>
<ellipse cx="24.9" cy="21.9" rx="15.3" ry="16" fill="url(#apple)"/>
<ellipse cx="46.8" cy="35" rx="15.8" ry="16.3" fill="url(#apple)"/>
<path d="M55 7 L55.5 10" stroke="#4a3a20" stroke-width="1.2"/>
<circle cx="54.5" cy="36.5" r="1.4" fill="#3a4a18"/><path d="M33.5 12.5 L35.5 15" stroke="#4a4a20" stroke-width="1.3"/>
</svg>
<svg style="left:16px;top:336px" width="82" height="60" viewBox="0 0 82 60">
<ellipse cx="31" cy="17" rx="12.2" ry="11.7" fill="url(#orange)"/>
<ellipse cx="54.4" cy="31.5" rx="13.7" ry="13.7" fill="url(#orange)"/>
<ellipse cx="28.5" cy="41.7" rx="15.3" ry="15.3" fill="url(#orange)"/>
<path d="M17 22 Q22 12 33 14 Q28 23 17 22 Z" fill="#4a9a3a"/>
<path d="M56 12 Q62 4 72 8 Q72 18 63 20 Z" fill="#3a8a3a"/>
<path d="M53 18 Q60 14 68 24 Q60 28 55 26 Z" fill="#2f7a30"/>
<path d="M45 14 Q48 11 50 12 Q48 18 45 17 Z" fill="#3a7a30"/>
<path d="M50 5 L53 18" stroke="#5a6a3a" stroke-width="0.9"/>
</svg>
<svg style="left:16px;top:396px" width="82" height="60" viewBox="0 0 82 60">
<ellipse cx="21.9" cy="29" rx="20.3" ry="14.7" transform="rotate(8 21.9 29)" fill="url(#potato)"/>
<ellipse cx="60" cy="39.2" rx="20.8" ry="15.8" transform="rotate(-14 60 39.2)" fill="url(#potato)"/>
<ellipse cx="44.3" cy="17.3" rx="19.3" ry="12.7" transform="rotate(4 44.3 17.3)" fill="url(#potato)"/>
<ellipse cx="38" cy="14" rx="2.2" ry="1.4" fill="#fff4d0" opacity="0.8"/>
<ellipse cx="50" cy="35" rx="2" ry="1.3" fill="#fff4d0" opacity="0.7"/>
<ellipse cx="20" cy="31" rx="1.8" ry="1.2" fill="#fff4d0" opacity="0.6"/>
<circle cx="8" cy="27" r="0.9" fill="#b87a30" opacity="0.7"/><circle cx="70" cy="36" r="0.9" fill="#b87a30" opacity="0.7"/>
<circle cx="27" cy="36" r="0.8" fill="#b87a30" opacity="0.6"/><circle cx="56" cy="14" r="0.8" fill="#b87a30" opacity="0.6"/>
</svg>
<div class="a" style="left:16px;top:243px;width:1px;height:279px;background:#b4b4b4"></div>
<div class="a" style="left:16px;top:243px;width:776px;height:1px;background:#b4b4b4"></div>
<div class="a" style="left:18px;top:524px;width:25px;height:25px;border:1px solid #5a5a5a;background:#fff;box-shadow:inset 0 0 0 1px #fafafa"></div>
<div class="a" style="left:45px;top:524px;width:25px;height:25px;border:1px solid #5a5a5a;background:#fff;box-shadow:inset 0 0 0 1px #fafafa"></div>
<div class="a" style="left:72px;top:524px;width:25px;height:25px;border:1px solid #5a5a5a;background:#fff;box-shadow:inset 0 0 0 1px #fafafa"></div>
<div class="a" style="left:99px;top:524px;width:25px;height:25px;border:1px solid #5a5a5a;background:#fff;box-shadow:inset 0 0 0 1px #fafafa"></div>
<div class="a" style="left:126px;top:524px;width:25px;height:25px;border:1px solid #5a5a5a;background:#fff;box-shadow:inset 0 0 0 1px #fafafa"></div>
<div class="a" style="left:153px;top:524px;width:25px;height:25px;border:1px solid #5a5a5a;background:#fff;box-shadow:inset 0 0 0 1px #fafafa"></div>
<div class="a" style="left:180px;top:524px;width:25px;height:25px;border:1px solid #5a5a5a;background:#fff;box-shadow:inset 0 0 0 1px #fafafa"></div>
<svg style="left:18px;top:524px" width="25" height="25" viewBox="0 0 25 25"><rect x="6.8" y="6" width="3.9" height="14" rx="1.9" fill="#8e8e8e"/><path d="M20.1 6 L20.1 20 L12.2 13 Z" fill="#8e8e8e"/></svg>
<svg style="left:45px;top:524px" width="25" height="25" viewBox="0 0 25 25"><path d="M16.1 6 L16.1 20 L7.8 13 Z" fill="#8e8e8e"/></svg>
<svg style="left:72px;top:524px" width="25" height="25" viewBox="0 0 25 25"><path d="M13.1 4.6 L19 11.3 L7.2 11.3 Z M13.1 21 L19 14.3 L7.2 14.3 Z M12.2 11 L14 11 L14 14.6 L12.2 14.6 Z" fill="#1b6fe6"/></svg>
<svg style="left:99px;top:524px" width="25" height="25" viewBox="0 0 25 25"><path d="M8.8 6 L8.8 20 L17.1 13 Z" fill="#8e8e8e"/></svg>
<svg style="left:126px;top:524px" width="25" height="25" viewBox="0 0 25 25"><path d="M5.9 6 L5.9 20 L14.2 13 Z" fill="#8e8e8e"/><rect x="14.9" y="6" width="3.9" height="14" rx="1.9" fill="#8e8e8e"/></svg>
<svg style="left:153px;top:524px" width="25" height="25" viewBox="0 0 25 25"><path d="M6 7 Q13.2 3 20.4 7 L14.6 13.5 L14.6 19.8 L11.8 19.8 L11.8 13.5 Z" fill="#b4dc28" stroke="#34420e" stroke-width="1"/><ellipse cx="13.2" cy="6.6" rx="5.6" ry="1.3" fill="#e8f8a0"/></svg>
<svg style="left:180px;top:524px" width="25" height="25" viewBox="0 0 25 25"><rect x="4.5" y="5.5" width="14" height="14" fill="#fff" stroke="#5a8ad0" stroke-width="1"/>
<rect x="5" y="6" width="13" height="2" fill="#58b85a"/>
<path d="M6 10.5 L17 10.5 M6 13 L17 13 M6 15.5 L17 15.5 M9 9 L9 19" stroke="#8aa8d8" stroke-width="0.8"/>
<circle cx="17" cy="16.5" r="3.6" fill="#d8d8d8" stroke="#777" stroke-width="1.4" stroke-dasharray="1.4 1"/><circle cx="17" cy="16.5" r="1.3" fill="#fff"/></svg>
<div class="t" style="left:684.00px;top:532.00px;font-size:11px;letter-spacing:-0.139px;color:#10081a">results from 1 to 3 of 3</div>
<div class="a" style="left:18px;top:551px;width:772px;height:34px;border:1px solid #696969;background:#fff"></div>
<div class="t" style="left:23.30px;top:564.00px;font-size:11px;letter-spacing:-0.086px;color:#10081a">Total quantity on stock:170,00</div>
<div class="t" style="left:179.80px;top:564.00px;font-size:11px;letter-spacing:-0.046px;color:#10081a">Total value of stock:160,00</div>
</body></html>
